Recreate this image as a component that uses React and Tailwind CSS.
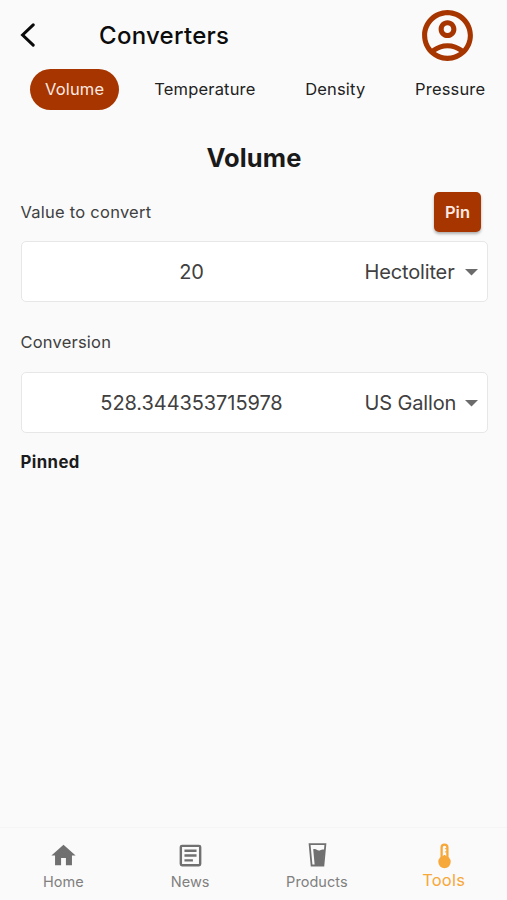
const TABS = ['Volume', 'Temperature', 'Density', 'Pressure']

function BackIcon() {
  return (
    <svg width="16" height="24" viewBox="0 0 16 24" fill="none" stroke="#0a0a0a" strokeWidth="3" strokeLinecap="round">
      <path d="M13.2 1.9 2.6 12 13.2 22.1" strokeLinejoin="miter" />
    </svg>
  )
}

function AccountIcon() {
  return (
    <svg width="61" height="61" viewBox="0 0 24 24" fill="#a63500">
      <path d="M12 2C6.48 2 2 6.48 2 12s4.48 10 10 10 10-4.48 10-10S17.52 2 12 2zM7.35 18.5C8.66 17.56 10.26 17 12 17s3.34.56 4.65 1.5C15.34 19.44 13.74 20 12 20s-3.34-.56-4.65-1.5zm10.79-1.38C16.45 15.8 14.32 15 12 15s-4.45.8-6.14 2.12C4.7 15.73 4 13.95 4 12c0-4.42 3.58-8 8-8s8 3.58 8 8c0 1.95-.7 3.73-1.86 5.12zM12 6c-1.93 0-3.5 1.57-3.5 3.5S10.07 13 12 13s3.5-1.57 3.5-3.5S13.93 6 12 6zm0 5c-.83 0-1.5-.67-1.5-1.5S11.17 8 12 8s1.5.67 1.5 1.5S12.83 11 12 11z" />
    </svg>
  )
}

function HomeIcon() {
  return (
    <svg width="29" height="29" viewBox="0 0 24 24" fill="currentColor">
      <path d="M10 20v-6h4v6h5v-8h3L12 3 2 12h3v8z" />
    </svg>
  )
}

function NewsIcon() {
  return (
    <svg width="29" height="29" viewBox="0 0 24 24" fill="none" stroke="currentColor" strokeWidth="2">
      <rect x="4" y="4" width="16" height="16" rx="1" />
      <path d="M7 8h10M7 12h10M7 16h7" />
    </svg>
  )
}

function GlassIcon() {
  return (
    <svg width="29" height="29" viewBox="0 0 29 29" fill="none">
      <path d="M6.6 3.2H22.4L20.4 24.5H8.6Z" stroke="currentColor" strokeWidth="1.8" />
      <path d="M10.2 8.2c1.6-.5 2.7-.2 3.6.5.8.7 1.6 1 3 .7 1.4-.5 2.6-.9 4.6-.8L20.2 24.5h-8.5z" fill="currentColor" />
    </svg>
  )
}

function ThermometerIcon() {
  return (
    <svg width="29" height="29" viewBox="0 0 29 29" fill="none">
      <circle cx="14.5" cy="21" r="6.2" fill="currentColor" />
      <path d="M11.6 18V6.6a2.9 2.9 0 0 1 5.8 0V18" stroke="currentColor" strokeWidth="2.3" />
      <path d="M14.5 14v5" stroke="currentColor" strokeWidth="2" />
      <path d="M15.2 7.6h1.6M15.2 10.8h1.6" stroke="currentColor" strokeWidth="1.3" />
    </svg>
  )
}

const NAV = [
  { label: 'Home', icon: HomeIcon },
  { label: 'News', icon: NewsIcon },
  { label: 'Products', icon: GlassIcon },
  { label: 'Tools', icon: ThermometerIcon, active: true },
]

function ValueField({ value, unit }) {
  return (
    <div className="flex h-[61px] items-center rounded-[5px] border-[1.5px] border-[#e7e7e7] bg-white text-[20px] text-[#404040]">
      <span className="w-[340px] text-center tracking-[-0.08px]">{value}</span>
      <button className="flex flex-1 items-center justify-between pl-[3px] pr-[9px] tracking-[-0.15px]">
        {unit}
        <svg className="mt-px" width="13" height="7" viewBox="0 0 13 7" fill="#6b6b6b">
          <path d="M0 0h13L6.5 6.5z" />
        </svg>
      </button>
    </div>
  )
}

export default function App() {
  return (
    <div className="flex h-[900px] w-[507px] flex-col overflow-hidden bg-[#fafafa] font-['Inter',sans-serif]">
      <header className="flex h-[70px] shrink-0 items-center pl-5 pr-[29.5px]">
        <button><BackIcon /></button>
        <h1 className="ml-[63px] flex-1 pt-px text-[24px] font-medium tracking-[0.28px] text-[#0c0c0c]">Converters</h1>
        <AccountIcon />
      </header>

      <nav className="-mt-px flex h-[41px] shrink-0 pl-[30px] text-[16.5px] tracking-[0.17px] text-[#222]">
        {TABS.map((tab, i) => (
          <button
            key={tab}
            className={i === 0
              ? 'mr-5 shrink-0 rounded-full bg-[#a63500] px-[15px] text-[#fbe9e1]'
              : 'mr-[19.7px] shrink-0 px-[15px]'}
          >
            {tab}
          </button>
        ))}
      </nav>

      <main className="flex-1 pl-[20.5px] pr-[19.5px]">
        <h2 className="mt-[30px] text-center text-[25.5px] font-bold leading-9 tracking-[0.1px] text-[#1a1a1a]">Volume</h2>

        <div className="mt-[15px] flex h-[42px] items-center justify-between pr-[6.5px]">
          <span className="text-[16.5px] tracking-[0.25px] text-[#404040]">Value to convert</span>
          <button className="h-10 w-[47px] rounded-[5px] bg-[#a63500] text-[16.5px] font-semibold text-[#fbe9e1] shadow-[0_2px_3px_rgba(0,0,0,0.3)]">Pin</button>
        </div>
        <div className="mt-2">
          <ValueField value="20" unit="Hectoliter" />
        </div>

        <p className="mb-[18px] mt-[27px] pt-px text-[16.5px] leading-6 tracking-[0.2px] text-[#404040]">Conversion</p>
        <ValueField value="528.344353715978" unit="US Gallon" />

        <h3 className="mt-[17px] text-[16.8px] font-bold leading-6 tracking-[0.4px] text-[#1c1c1c]">Pinned</h3>
      </main>

      <footer className="grid h-[73px] shrink-0 grid-cols-4 border-t border-[#f5f5f5] text-[#707070]">
        {NAV.map(({ label, icon: Icon, active }) => (
          <button
            key={label}
            className={active ? 'flex flex-col items-center pt-[13px] text-[#f7a83a]' : 'flex flex-col items-center pt-[13px]'}
          >
            <span className="pl-px"><Icon /></span>
            <span className={active ? 'text-[16.5px] leading-5 tracking-[0.2px]' : 'mt-[2px] text-[14.5px] leading-5 tracking-[0.05px] text-[#808080]'}>{label}</span>
          </button>
        ))}
      </footer>
    </div>
  )
}
